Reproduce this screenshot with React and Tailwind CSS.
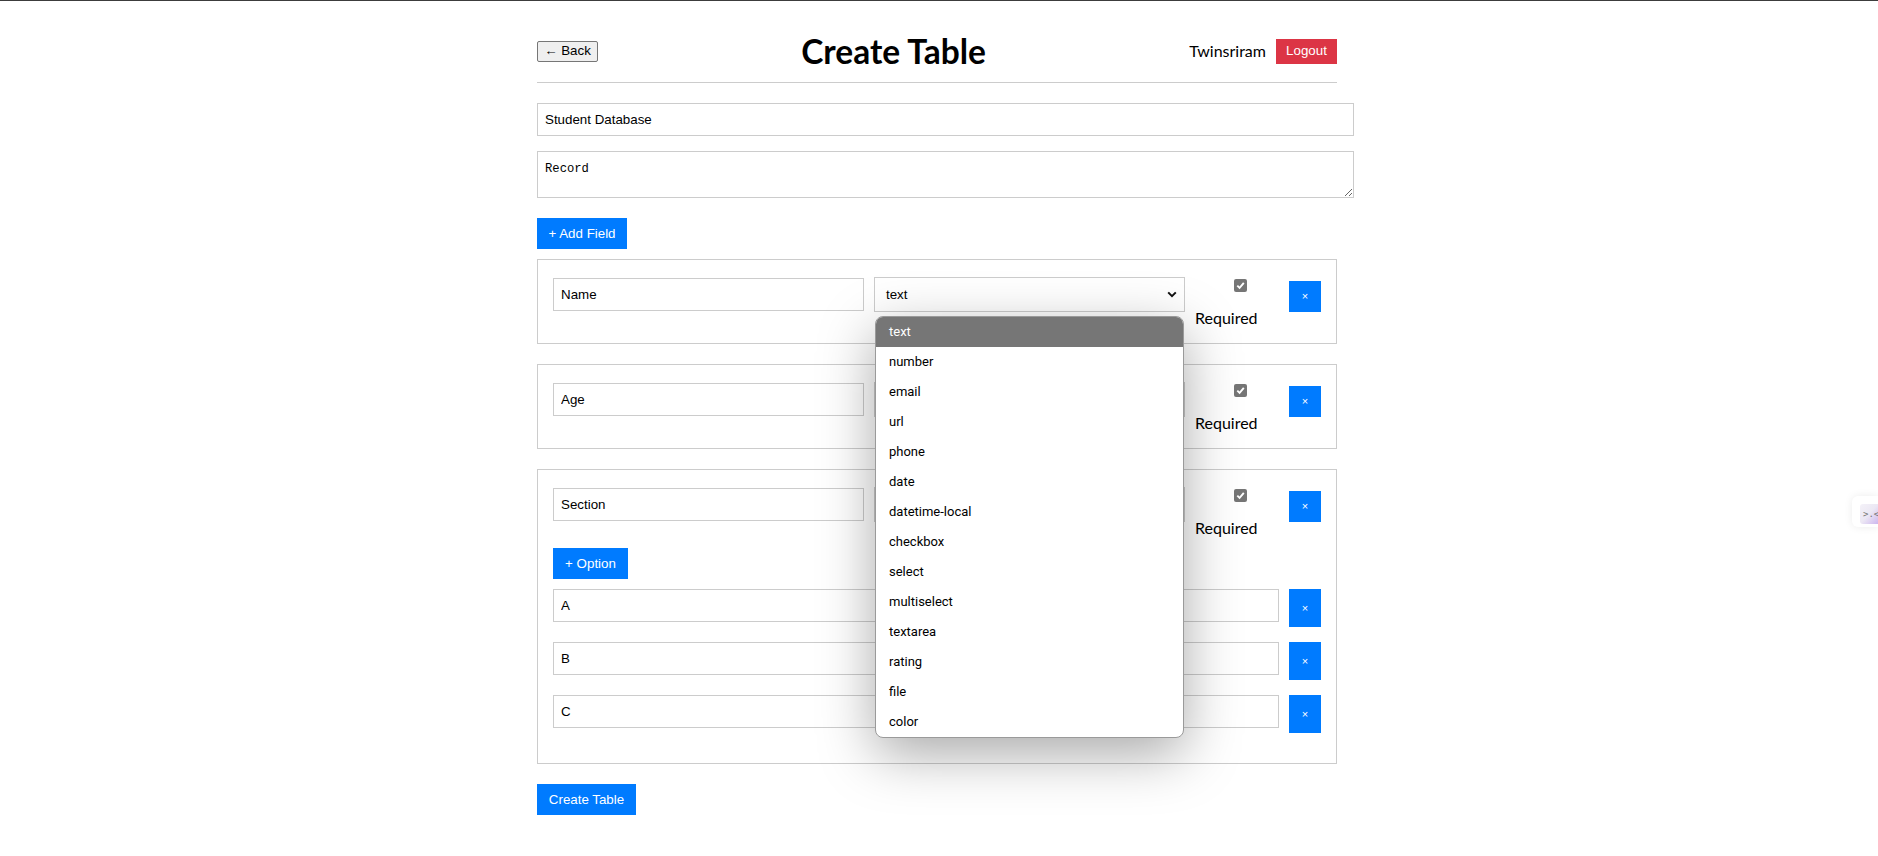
import React from 'react';

const types = [
    'text', 'number', 'email', 'url', 'phone', 'date', 'datetime-local',
    'checkbox', 'select', 'multiselect', 'textarea', 'rating', 'file', 'color',
];

const sans = "font-['Liberation_Sans',Arial,sans-serif]";
const ui = "font-['Lato','Open_Sans',sans-serif]";

const CheckMark = () => (
    <span className="block w-[13px] h-[13px] rounded-[2px] bg-[#767676] flex items-center justify-center">
        <svg width="9" height="9" viewBox="0 0 9 9">
            <path d="M1.3 4.6 L3.6 6.9 L7.8 1.8" stroke="#fff" strokeWidth="1.9" fill="none" />
        </svg>
    </span>
);

const XButton = ({ tall }) => (
    <button
        type="button"
        className={`w-[32px] ${tall ? 'h-[38px]' : 'h-[31px] mt-[6px]'} bg-[#007bff] text-white text-[11px] leading-none shrink-0 flex items-center justify-center ${sans}`}
    >
        ×
    </button>
);

const TypePopup = () => (
    <div className="absolute left-[1px] top-[39px] w-[309px] z-20 bg-white border border-[#9a9a9a] rounded-[8px] overflow-hidden shadow-[0_16px_55px_rgba(0,0,0,0.34)]">
        {types.map((t, i) => (
            <div
                key={t}
                className={`h-[30px] flex items-center pl-[13px] text-[13px] font-['Roboto',Arial,sans-serif] ${i === 0 ? 'bg-[#767676] text-white' : 'text-black'}`}
            >
                {t}
            </div>
        ))}
    </div>
);

const FieldRow = ({ name, open }) => (
    <div className="flex items-start gap-[10px]">
        <input
            readOnly
            value={name}
            className={`w-[311px] shrink-0 h-[33px] mt-[3px] px-[7px] border border-[#ccc] text-[13.33px] text-black outline-none ${sans}`}
        />
        <div className="w-[311px] shrink-0 relative mt-[2px]">
            <div className={`h-[35px] border border-[#ccc] flex items-center justify-between pl-[11px] pr-[7px] text-[13.33px] text-black ${sans}`}>
                <span>text</span>
                <svg width="10" height="7" viewBox="0 0 10 7">
                    <path d="M1.2 1.4 L5 5.2 L8.8 1.4" stroke="#111" strokeWidth="2" fill="none" />
                </svg>
            </div>
            {open && <TypePopup />}
        </div>
        <label className={`w-[84px] h-[53px] shrink-0 flex flex-col ${ui}`}>
            <span className="ml-[39px] mt-[4px]">
                <CheckMark />
            </span>
            <span className="mt-[16px] text-[16px] leading-[19px] text-black">Required</span>
        </label>
        <XButton />
    </div>
);

const OptionRow = ({ label }) => (
    <div className="flex items-start gap-[10px] mb-[15px]">
        <input
            readOnly
            value={label}
            className={`flex-1 min-w-0 h-[33px] px-[7px] border border-[#ccc] text-[13.33px] text-black outline-none ${sans}`}
        />
        <XButton tall />
    </div>
);

const BlueButton = ({ children, w, className = '' }) => (
    <button
        type="button"
        className={`${w} h-[31px] bg-[#007bff] text-white text-[13.33px] flex items-center justify-center ${sans} ${className}`}
    >
        {children}
    </button>
);

export default function App() {
    return (
        <div className="min-h-screen bg-white border-t border-[#3c3c3c] relative overflow-hidden">
            <div className="w-[804px] mx-auto pr-[4px] pt-[19px] pb-[40px]">
                {/* Header */}
                <header className="flex items-center justify-between pt-[12px] pb-[12px] border-b border-[#ccc]">
                    <button
                        type="button"
                        className={`w-[61px] h-[21px] bg-[#efefef] border border-[#767676] rounded-[2px] text-[13.33px] text-black flex items-center justify-center ${sans}`}
                    >
                        ← Back
                    </button>
                    <h1 className={`text-[33.5px] font-bold leading-[38px] text-black ${ui}`}>Create Table</h1>
                    <div className="flex items-center gap-[10px]">
                        <span className={`text-[16px] text-black ${ui}`}>Twinsriram</span>
                        <button
                            type="button"
                            className={`w-[61px] h-[25px] bg-[#dc3545] text-white text-[13.33px] flex items-center justify-center ${sans}`}
                        >
                            Logout
                        </button>
                    </div>
                </header>

                <input
                    readOnly
                    value="Student Database"
                    className={`block w-[817px] h-[33px] mt-[20px] px-[7px] border border-[#ccc] text-[13.33px] text-black outline-none ${sans}`}
                />
                <textarea
                    readOnly
                    value="Record"
                    className="block w-[817px] h-[47px] mt-[15px] px-[7px] pt-[10px] pb-[4px] border border-[#ccc] text-[12.2px] leading-[15px] text-black outline-none font-['Liberation_Mono','DejaVu_Sans_Mono',monospace]"
                />

                <BlueButton w="w-[90px]" className="mt-[20px]">+ Add Field</BlueButton>

                {/* Fields */}
                <div className="mt-[10px] border border-[#ccc] p-[15px]">
                    <FieldRow name="Name" open />
                </div>
                <div className="mt-[20px] border border-[#ccc] p-[15px]">
                    <FieldRow name="Age" />
                </div>
                <div className="mt-[20px] border border-[#ccc] p-[15px]">
                    <FieldRow name="Section" />
                    <BlueButton w="w-[75px]" className="mt-[10px] mb-[10px]">+ Option</BlueButton>
                    <OptionRow label="A" />
                    <OptionRow label="B" />
                    <OptionRow label="C" />
                </div>

                <BlueButton w="w-[99px]" className="mt-[20px]">Create Table</BlueButton>
            </div>

            {/* Floating extension tab */}
            <div className="absolute right-0 top-[495px] w-[26px] h-[31px] bg-white rounded-l-[6px] shadow-[0_0_8px_rgba(0,0,0,0.08)] pl-[8px] pt-[8px]">
                <div className="w-full h-[20px] rounded-l-[3px] bg-gradient-to-br from-[#f4f2f8] via-[#ece8f4] to-[#cdb6ee] text-[9px] leading-[20px] text-[#777] pl-[3px] font-['DejaVu_Sans_Mono',monospace] overflow-hidden whitespace-nowrap">
                    &gt;.&lt;
                </div>
            </div>
        </div>
    );
}
